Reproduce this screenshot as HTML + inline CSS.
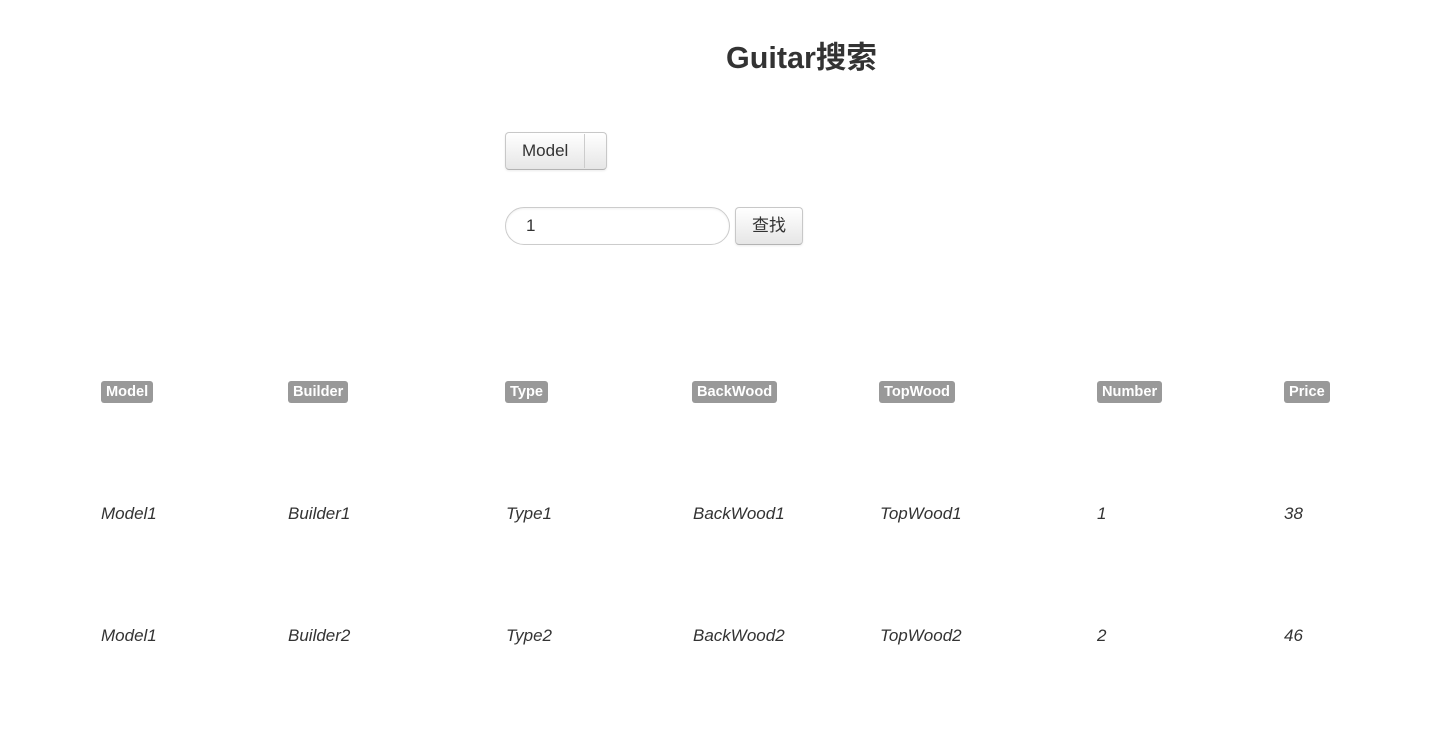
<!DOCTYPE html>
<html><head><meta charset="utf-8"><style>
body{margin:0;width:1434px;height:736px;background:#fff;font-family:"Liberation Sans","Noto Sans CJK SC",sans-serif;color:#333;position:relative;overflow:hidden}
.a{position:absolute}
h1{position:absolute;left:726px;top:39px;margin:0;font-size:30.5px;font-weight:bold;color:#333;line-height:38px;white-space:nowrap}
.btn{position:absolute;box-sizing:border-box;border:1px solid #c8c8c8;border-bottom-color:#b3b3b3;border-radius:4px;background:linear-gradient(#fff,#e6e6e6);font-size:17px;color:#333;line-height:35px;text-align:center;box-shadow:0 1px 2px rgba(0,0,0,.08)}
.lbl{position:absolute;top:381px;height:22px;line-height:23px;background:#999;color:#fff;font-weight:bold;font-size:14.6px;padding:0 5px;border-radius:3px}
.c{position:absolute;font-style:italic;font-size:17px;color:#333;line-height:20px}
</style></head><body>
<h1>Guitar搜索</h1>
<div class="btn" style="left:505px;top:132px;width:102px;height:38px;text-align:left">
<span style="position:absolute;left:16px;top:0">Model</span>
<span style="position:absolute;left:78px;top:1px;width:1px;height:34px;background:#ccc"></span>
</div>
<div class="a" style="left:505px;top:207px;width:225px;height:38px;box-sizing:border-box;border:1px solid #ccc;border-radius:19px;font-size:17px;line-height:36px;padding-left:20px;box-shadow:inset 0 1px 2px rgba(0,0,0,.06)">1</div>
<div class="btn" style="left:735px;top:207px;width:68px;height:38px">查找</div>

<span class="lbl" style="left:101px">Model</span>
<span class="lbl" style="left:288px">Builder</span>
<span class="lbl" style="left:505px">Type</span>
<span class="lbl" style="left:692px">BackWood</span>
<span class="lbl" style="left:879px">TopWood</span>
<span class="lbl" style="left:1097px">Number</span>
<span class="lbl" style="left:1284px">Price</span>

<span class="c" style="left:101px;top:504px">Model1</span>
<span class="c" style="left:288px;top:504px">Builder1</span>
<span class="c" style="left:506px;top:504px">Type1</span>
<span class="c" style="left:693px;top:504px">BackWood1</span>
<span class="c" style="left:880px;top:504px">TopWood1</span>
<span class="c" style="left:1097px;top:504px">1</span>
<span class="c" style="left:1284px;top:504px">38</span>

<span class="c" style="left:101px;top:626px">Model1</span>
<span class="c" style="left:288px;top:626px">Builder2</span>
<span class="c" style="left:506px;top:626px">Type2</span>
<span class="c" style="left:693px;top:626px">BackWood2</span>
<span class="c" style="left:880px;top:626px">TopWood2</span>
<span class="c" style="left:1097px;top:626px">2</span>
<span class="c" style="left:1284px;top:626px">46</span>
</body></html>
